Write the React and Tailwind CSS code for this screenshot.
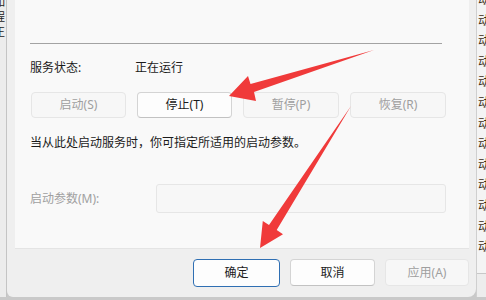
const DisabledText = 'text-[#a0a0a0]'

const Btn = ({children, disabled, primary, className}) => (
  <div
    className={`flex items-center justify-center rounded-[4px] text-[12px] ${
      disabled
        ? 'bg-[#f7f7f7] border border-[#e6e6e6] text-[#9f9f9f]'
        : primary
        ? 'bg-[#fdfdfd] border-[1.5px] border-[#2f6fb3] text-[#1b1b1b]'
        : 'bg-[#fdfdfd] border border-[#d4d4d4] border-b-[#c2c2c2] text-[#1b1b1b]'
    } ${className}`}
  >
    {children}
  </div>
)

const Arrows = () => (
  <svg className="absolute left-0 top-0 pointer-events-none" width="486" height="300" viewBox="0 0 486 300">
    <polygon
      points="374,50 250.5,84 248,76 229,96 256,101 254,92"
      fill="#f03a3a"
    />
    <polygon
      points="351,106 269,225 262.8,221 260,248 283,234.3 276.7,230"
      fill="#f03a3a"
    />
  </svg>
)

const App = () => {
  const rightRows = Array.from({length: 13})
  return (
    <div className="relative w-[486px] h-[300px] overflow-hidden bg-[#c9c9c9] font-['Noto_Sans','Noto_Sans_CJK_SC',sans-serif]">
      <div className="flex h-[297px]">
        {/* left background window */}
        <div className="w-[7px] shrink-0 bg-[#ececec] overflow-hidden border-r border-[#c4c4c4]">
          <div className="flex flex-col -ml-[6px] -mt-[6px] text-[11px] text-[#222]">
            <span className="h-[15px] leading-[15px]">如</span>
            <span className="h-[15px] leading-[15px]">程</span>
            <span className="h-[15px] leading-[15px]">正</span>
          </div>
        </div>

        {/* dialog */}
        <div className="w-[469px] shrink-0 flex flex-col bg-[#efefef] rounded-br-[8px] rounded-bl-[6px]">
          <div className="ml-[8px] mr-[7px] h-[249px] bg-[#f9f9f9] border-b border-[#e4e4e4] pl-[15px] pr-[23px] flex flex-col">
            <div className="mt-[43px] h-px bg-[#a3a3a3] mr-[4px]" />
            <div className="mt-[15px] flex items-center h-[18px] text-[12px] text-[#1b1b1b]">
              <span className="w-[105px]">服务状态:</span>
              <span>正在运行</span>
            </div>
            <div className="mt-[15px] flex gap-[11px] pl-[1px]">
              <Btn disabled className="w-[95px] h-[26px]">启动(S)</Btn>
              <Btn className="w-[95px] h-[26px]">停止(T)</Btn>
              <Btn disabled className="w-[96px] h-[26px]">暂停(P)</Btn>
              <Btn disabled className="w-[96px] h-[26px]">恢复(R)</Btn>
            </div>
            <div className="mt-[16px] h-[18px] flex items-center text-[12px] text-[#1b1b1b]">
              当从此处启动服务时，你可指定所适用的启动参数。
            </div>
            <div className="mt-[32px] flex items-center">
              <span className={`w-[126px] text-[12px] ${DisabledText}`}>启动参数(M):</span>
              <div className="w-[290px] h-[29px] bg-[#f7f7f7] border border-[#e6e6e6] rounded-[3px]" />
            </div>
          </div>
          <div className="flex justify-end gap-[10px] pr-[7px] pt-[10px]">
            <Btn primary className="w-[87px] h-[28px]">确定</Btn>
            <Btn className="w-[85px] h-[27px]">取消</Btn>
            <Btn disabled className="w-[84px] h-[27px]">应用(A)</Btn>
          </div>
        </div>

        {/* right background window */}
        <div className="flex-1 bg-[#f4f4f4] border-l border-[#cfcfcf] overflow-hidden flex flex-col">
          <div className="flex flex-col -mt-[10px] pl-[1px] text-[12px] text-[#3a2c14]">
            {rightRows.map((_, i) => (
              <span key={i} className="h-[20.6px] leading-[20.6px]">动</span>
            ))}
          </div>
          <div className="mt-auto h-[24px] border-t border-[#c8c8c8] bg-[#ededed]" />
        </div>
      </div>
      <Arrows />
    </div>
  )
}

export default App
